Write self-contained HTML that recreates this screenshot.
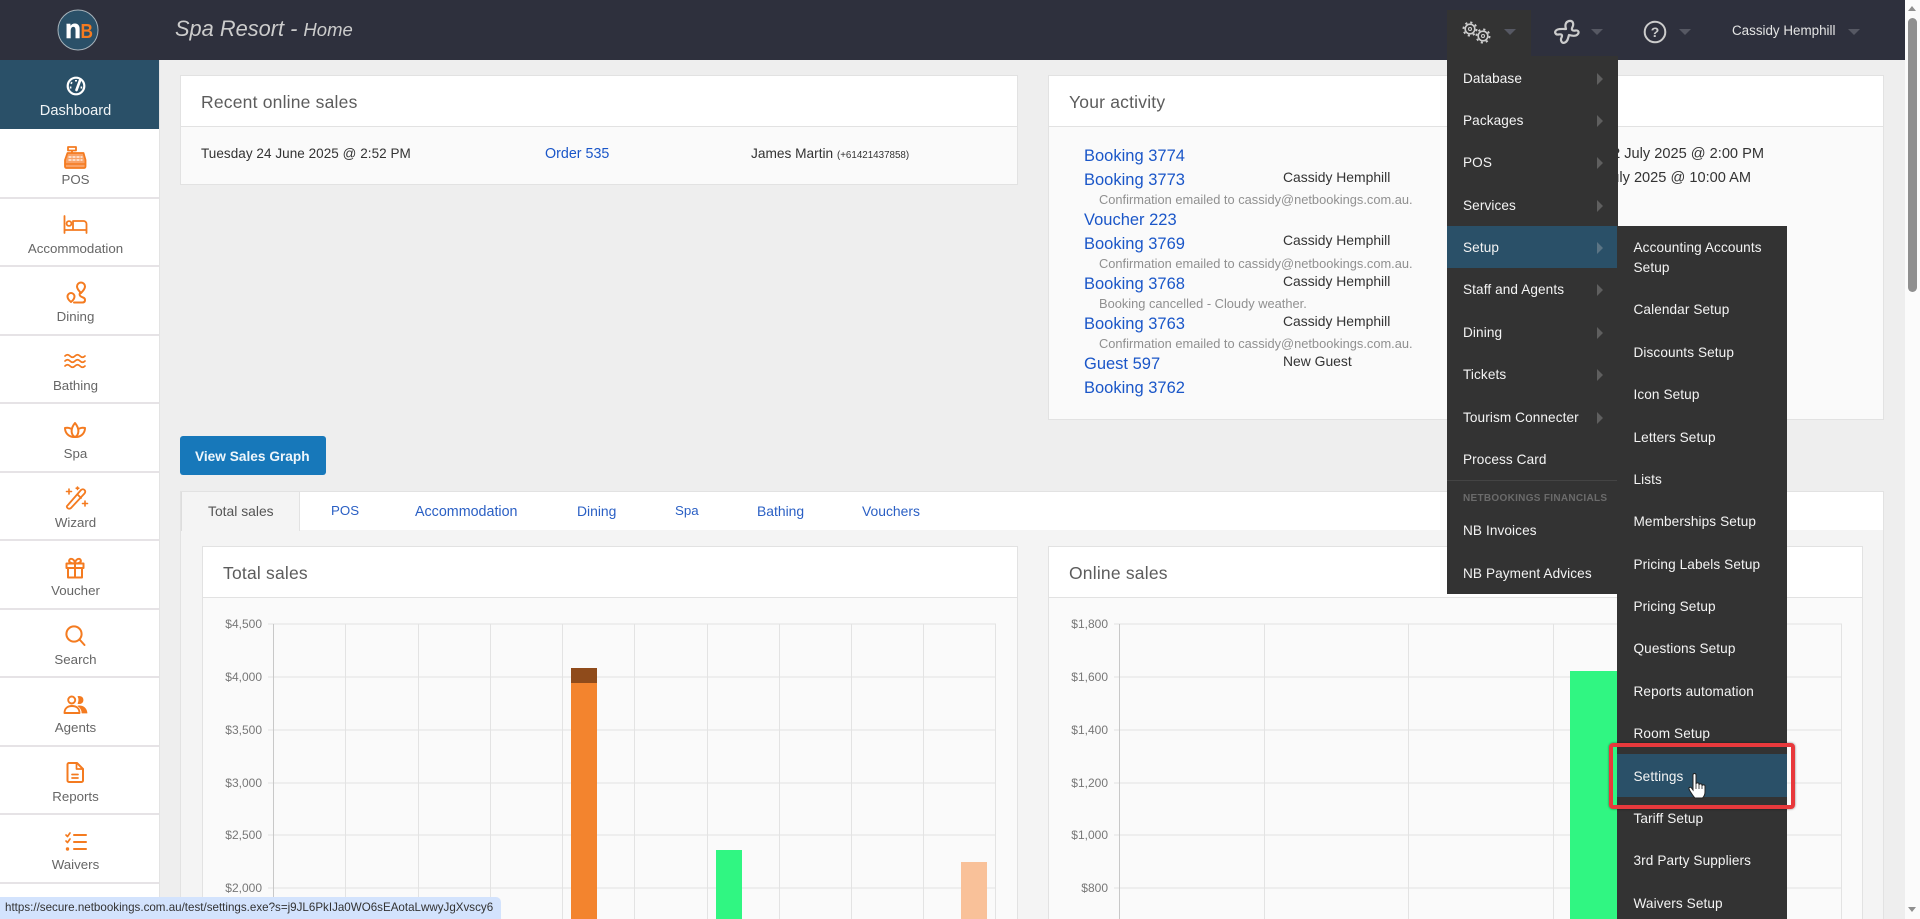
<!DOCTYPE html>
<html><head><meta charset="utf-8"><title>Spa Resort - Home</title>
<style>
html,body{margin:0;padding:0;width:1920px;height:919px;overflow:hidden;background:#eee;font-family:"Liberation Sans",sans-serif;color:#444}
.a,.t{position:absolute}
.t{white-space:nowrap;line-height:20px;font-size:13.5px;margin-top:1px}
a{color:#1a56c8;text-decoration:none}
.side{color:#666;font-size:13.3px;width:151px;left:0;text-align:center}
.ln{position:absolute;left:0;width:159px;height:2px;background:#e6e3e6}
.ic{position:absolute;left:55px;width:40px;height:40px;fill:none;stroke:#f47b20;stroke-width:1.8;stroke-linecap:round;stroke-linejoin:round}
.m{color:#f4f4f4;font-size:13.6px;letter-spacing:.1px}
.ar{position:absolute;left:1597px;width:0;height:0;margin-top:1px;border-left:6px solid #5f5f5f;border-top:6px solid transparent;border-bottom:6px solid transparent}
.car{position:absolute;top:29px;width:0;height:0;border-top:6px solid #565863;border-left:6px solid transparent;border-right:6px solid transparent}
.pt{font-size:17.5px;color:#5c5c5c;letter-spacing:.2px}
.lk{font-size:16.5px;color:#1a56c8}
.nm{font-size:13.9px;color:#333}
.cf{font-size:12.85px;color:#909090}
.tb{font-size:13.9px;color:#2a5fc4;top:500px}
.yl{font-size:12px;color:#777;text-align:right;width:60px;margin-top:0}
</style></head><body>

<!-- main panels -->
<div class="a" style="left:180px;top:75px;width:836px;height:108px;background:#fafafa;border:1px solid #e2e2e2"></div>
<div class="a" style="left:181px;top:76px;width:836px;height:50px;background:#fff;border-bottom:1px solid #e2e2e2"></div>
<div class="t pt" style="left:201px;top:91px">Recent online sales</div>
<div class="t" style="left:201px;top:143px;color:#333;letter-spacing:.05px">Tuesday 24 June 2025 @ 2:52 PM</div>
<a class="t" style="left:545px;top:143px;font-size:14.3px">Order 535</a>
<div class="t" style="left:751px;top:143px;color:#333;font-size:13.7px">James Martin <span style="font-size:9.8px">(+61421437858)</span></div>

<div class="a" style="left:1048px;top:75px;width:834px;height:343px;background:#fafafa;border:1px solid #e2e2e2"></div>
<div class="a" style="left:1049px;top:76px;width:834px;height:50px;background:#fff;border-bottom:1px solid #e2e2e2"></div>
<div class="t pt" style="left:1069px;top:91px">Your activity</div>
<a class="t lk" style="left:1084px;top:145px">Booking 3774</a>
<a class="t lk" style="left:1084px;top:169px">Booking 3773</a>
<div class="t nm" style="left:1283px;top:166px">Cassidy Hemphill</div>
<div class="t cf" style="left:1099px;top:189px">Confirmation emailed to cassidy@netbookings.com.au.</div>
<a class="t lk" style="left:1084px;top:209px">Voucher 223</a>
<a class="t lk" style="left:1084px;top:233px">Booking 3769</a>
<div class="t nm" style="left:1283px;top:229px">Cassidy Hemphill</div>
<div class="t cf" style="left:1099px;top:253px">Confirmation emailed to cassidy@netbookings.com.au.</div>
<a class="t lk" style="left:1084px;top:273px">Booking 3768</a>
<div class="t nm" style="left:1283px;top:270px">Cassidy Hemphill</div>
<div class="t cf" style="left:1099px;top:293px">Booking cancelled - Cloudy weather.</div>
<a class="t lk" style="left:1084px;top:313px">Booking 3763</a>
<div class="t nm" style="left:1283px;top:310px">Cassidy Hemphill</div>
<div class="t cf" style="left:1099px;top:333px">Confirmation emailed to cassidy@netbookings.com.au.</div>
<a class="t lk" style="left:1084px;top:353px">Guest 597</a>
<div class="t nm" style="left:1283px;top:350px">New Guest</div>
<a class="t lk" style="left:1084px;top:377px">Booking 3762</a>
<div class="t" style="right:156px;top:143px;color:#333;font-size:14.6px">Wednesday 2 July 2025 @ 2:00 PM</div>
<div class="t" style="right:169px;top:167px;color:#333;font-size:14.6px">Tuesday 1 July 2025 @ 10:00 AM</div>

<div class="a" style="left:180px;top:436px;width:146px;height:39px;background:#1778ba;border-radius:3px"></div>
<div class="t" style="left:195px;top:446px;color:#eef6fb;font-weight:bold;font-size:13.7px">View Sales Graph</div>

<!-- tabs -->
<div class="a" style="left:180px;top:491px;width:1702px;height:38px;background:#fff;border:1px solid #e2e2e2"></div>
<div class="a" style="left:180px;top:530px;width:1702px;height:389px;background:#f4f4f4;border-left:1px solid #e2e2e2;border-right:1px solid #e2e2e2"></div>
<div class="a" style="left:181px;top:492px;width:117px;height:39px;background:#f4f4f4;border-left:1px solid #ddd;border-right:1px solid #e2e2e2"></div>
<div class="t tb" style="left:208px;color:#555">Total sales</div>
<a class="t tb" style="left:331px;font-size:13.3px">POS</a>
<a class="t tb" style="left:415px;font-size:14.3px;top:501px">Accommodation</a>
<a class="t tb" style="left:577px">Dining</a>
<a class="t tb" style="left:675px;font-size:13.3px">Spa</a>
<a class="t tb" style="left:757px">Bathing</a>
<a class="t tb" style="left:862px">Vouchers</a>

<!-- chart panels -->
<div class="a" style="left:202px;top:546px;width:816px;height:373px;background:#fafafa;border-left:1px solid #e2e2e2;border-right:1px solid #e2e2e2;border-top:1px solid #e2e2e2;box-sizing:border-box"></div>
<div class="a" style="left:203px;top:547px;width:814px;height:50px;background:#fff;border-bottom:1px solid #e2e2e2"></div>
<div class="t pt" style="left:223px;top:562px">Total sales</div>
<div class="a" style="left:1048px;top:546px;width:815px;height:373px;background:#fafafa;border-left:1px solid #e2e2e2;border-right:1px solid #e2e2e2;border-top:1px solid #e2e2e2;box-sizing:border-box"></div>
<div class="a" style="left:1049px;top:547px;width:813px;height:50px;background:#fff;border-bottom:1px solid #e2e2e2"></div>
<div class="t pt" style="left:1069px;top:562px">Online sales</div>

<svg class="a" style="left:0;top:0" width="1920" height="919">
 <g stroke="#e3e3e3" stroke-width="1" shape-rendering="crispEdges">
  <path d="M268 624H996M268 677H996M268 730H996M268 783H996M268 835H996M268 888H996"/>
  <path d="M345.5 624V919M418.5 624V919M490.5 624V919M562.5 624V919M634.5 624V919M707.5 624V919M779.5 624V919M851.5 624V919M923.5 624V919M995.5 624V919"/>
  <path d="M1114 624H1842M1114 677H1842M1114 730H1842M1114 783H1842M1114 835H1842M1114 888H1842"/>
  <path d="M1264.5 624V919M1408.5 624V919M1553.5 624V919M1697.5 624V919M1841.5 624V919"/>
 </g>
 <path d="M273.5 624V919M1119.5 624V919" stroke="#c8c8c8" shape-rendering="crispEdges"/>
 <rect x="571" y="668" width="26" height="15" fill="#8f4b1b"/>
 <rect x="571" y="683" width="26" height="236" fill="#f3842e"/>
 <rect x="716" y="850" width="26" height="69" fill="#30f682"/>
 <rect x="961" y="862" width="26" height="57" fill="#f9c199"/>
 <rect x="1570" y="671" width="52" height="248" fill="#30f682"/>
</svg>
<div class="t yl" style="left:202px;top:614px">$4,500</div>
<div class="t yl" style="left:202px;top:667px">$4,000</div>
<div class="t yl" style="left:202px;top:720px">$3,500</div>
<div class="t yl" style="left:202px;top:773px">$3,000</div>
<div class="t yl" style="left:202px;top:825px">$2,500</div>
<div class="t yl" style="left:202px;top:878px">$2,000</div>
<div class="t yl" style="left:1048px;top:614px">$1,800</div>
<div class="t yl" style="left:1048px;top:667px">$1,600</div>
<div class="t yl" style="left:1048px;top:720px">$1,400</div>
<div class="t yl" style="left:1048px;top:773px">$1,200</div>
<div class="t yl" style="left:1048px;top:825px">$1,000</div>
<div class="t yl" style="left:1048px;top:878px">$800</div>

<!-- sidebar -->
<div class="a" style="left:0;top:60px;width:159px;height:859px;background:#fff;border-right:1px solid #e3e3e3"></div>
<div class="a" style="left:0;top:60px;width:159px;height:69px;background:#2a5068"></div>
<svg class="a" style="left:56px;top:66px" width="40" height="40" viewBox="0 0 40 40">
 <circle cx="20" cy="20" r="8.300" fill="#2a5068" stroke="#fff" stroke-width="2.200"/>
 <path d="M20 14v1.500M14.800 16.500l1.300 1M13.800 21.500h1.600M26.200 21.500h-1.600" stroke="#fff" stroke-width="2"/>
 <path d="M24 14.500L20.500 24" stroke="#fff" stroke-width="2.600" stroke-linecap="round"/>
</svg>
<div class="t side" style="top:100px;color:#f0f4f6;font-size:14.6px">Dashboard</div>

<div class="ln" style="top:197px"></div><div class="ln" style="top:265px"></div><div class="ln" style="top:334px"></div><div class="ln" style="top:402px"></div><div class="ln" style="top:471px"></div><div class="ln" style="top:539px"></div><div class="ln" style="top:608px"></div><div class="ln" style="top:676px"></div><div class="ln" style="top:745px"></div><div class="ln" style="top:813px"></div><div class="ln" style="top:882px"></div>

<svg class="ic" style="top:136px" viewBox="0 0 40 40"><path d="M13 11h8v3.500h-8zM17 14.500v2.500"/><path d="M12.500 17h16l2 7v6.500a1.500 1.500 0 0 1-1.500 1.500H11.500a1.500 1.500 0 0 1-1.500-1.500V24z" fill="#f9a267"/><path d="M14 21h2M18 21h2M22 21h2M26 21h1M14 24h2M18 24h2M22 24h2M26 24h1" stroke="#fff" stroke-width="1.300"/><path d="M10 28h20" stroke-width="1.500"/></svg>
<div class="t side" style="top:169px">POS</div>
<svg class="ic" style="top:204px" viewBox="0 0 40 40"><path d="M9.500 12v17M9.500 26h22M31.500 29V20a3 3 0 0 0-3-3H18v9"/><circle cx="14" cy="19.500" r="2.400"/></svg>
<div class="t side" style="top:238px">Accommodation</div>
<svg class="ic" style="top:273px" viewBox="0 0 40 40"><path d="M26 20c-3-3-4-5-4-6.500a4 4 0 0 1 8 0c0 1.500-1 3.500-4 6.500z" stroke-width="2"/><path d="M16 29c-2.500-2-3.500-4-3.500-5.500a3.500 3.500 0 0 1 7 0c0 1.500-1 3.500-3.500 5.500z" stroke-width="2"/><path d="M25 20c-1 2 0 3.500 3 4.500 3 1 2.500 5-.5 5H19" stroke-width="2"/></svg>
<div class="t side" style="top:306px">Dining</div>
<svg class="ic" style="top:341px" viewBox="0 0 40 40"><path d="M10 15q2.500-2.500 5 0t5 0 5 0 5 0M10 20q2.500-2.500 5 0t5 0 5 0 5 0M10 25q2.500-2.500 5 0t5 0 5 0 5 0" stroke-width="1.700"/></svg>
<div class="t side" style="top:375px">Bathing</div>
<svg class="ic" style="top:410px" viewBox="0 0 40 40"><path d="M20 27c-4-2-5-8 0-14 5 6 4 12 0 14z" stroke-width="2"/><path d="M15.500 18.500c-2-1-3.500-1-5.500-.5 0 5.500 4.500 9.500 10 9 5.500.5 10-3.500 10-9-2-.5-3.500-.5-5.500.5" stroke-width="2"/></svg>
<div class="t side" style="top:443px">Spa</div>
<svg class="ic" style="top:478px" viewBox="0 0 40 40"><path d="M12.500 27.500L26 12q2-1.500 3.500 0t0 3.500L16 30q-2 1.500-3.500 0t0-2.500z" stroke-width="1.800"/><path d="M22.500 16.500l3.500 3.500" /><path d="M14 11v5M11.500 13.500h5M30 23v5M27.500 25.500h5M22.500 9v2.500M21.200 10.200h2.600" stroke-width="1.600"/></svg>
<div class="t side" style="top:512px">Wizard</div>
<svg class="ic" style="top:547px" viewBox="0 0 40 40"><path d="M11.500 16.500h17v4.500h-17zM13 21v9.500h14V21M20 16.500v14" stroke-width="2"/><path d="M20 16.500c-5.500 0-6.500-2-5.500-3.800s5-1 5.500 3.800c.5-4.800 4.500-5.600 5.500-3.800s0 3.800-5.500 3.800z" stroke-width="2"/></svg>
<div class="t side" style="top:580px">Voucher</div>
<svg class="ic" style="top:615px" viewBox="0 0 40 40"><circle cx="19" cy="19" r="7.600" stroke-width="2"/><path d="M25 25l4.500 5" stroke-width="2"/></svg>
<div class="t side" style="top:649px">Search</div>
<svg class="ic" style="top:684px" viewBox="0 0 40 40"><circle cx="16.700" cy="16" r="3.500" stroke-width="1.900"/><path d="M9.500 29c0-4.500 3-7 7.500-7s7.500 2.500 7.500 7z" stroke-width="1.900"/><path d="M23 12.500c3-.5 5 1 5 3.500s-2 4-5 3.500c1-2 1-5 0-7z" fill="#f47b20" stroke-width=".8"/><path d="M23 22c5-.5 8.500 2 9 7h-5c0-3-1.500-5.500-4-7z" fill="#f47b20" stroke-width=".8"/></svg>
<div class="t side" style="top:717px">Agents</div>
<svg class="ic" style="top:752px" viewBox="0 0 40 40"><path d="M14 11h8l6 6v11.500a1.500 1.500 0 0 1-1.500 1.500h-12.500a1.500 1.500 0 0 1-1.500-1.500V12.500A1.500 1.500 0 0 1 14 11z" stroke-width="2"/><path d="M21.500 11v6h6.500M17 22.500h6M17 26h6" stroke-width="1.700"/></svg>
<div class="t side" style="top:786px">Reports</div>
<svg class="ic" style="top:821px" viewBox="0 0 40 40"><path d="M19 14h12M19 21h12M19 28h12" stroke-width="2"/><path d="M11 14l1.500 1.500L15 12M11 20l1.500 1.500L15 18" stroke-width="1.700"/><circle cx="12.500" cy="28" r=".9" stroke-width="1.600"/></svg>
<div class="t side" style="top:854px">Waivers</div>

<!-- topbar -->
<div class="a" style="left:0;top:0;width:1905px;height:60px;background:#2e303d"></div>
<svg class="a" style="left:56px;top:8px" width="44" height="44" viewBox="0 0 44 44">
 <circle cx="22" cy="22" r="20" fill="#2a5068" stroke="#a6b2ba" stroke-width="1"/>
 <text x="9" y="30" font-family="Liberation Sans" font-weight="bold" font-size="26.500" fill="#fff" stroke="#fff" stroke-width=".5" textLength="16" lengthAdjust="spacingAndGlyphs">n</text>
 <text x="24.500" y="30" font-family="Liberation Sans" font-weight="bold" font-size="20" fill="#f47b20" textLength="12.500" lengthAdjust="spacingAndGlyphs">B</text>
</svg>
<div class="t" style="left:175px;top:17px;margin-top:0;font-size:21.8px;font-style:italic;color:#ccc;line-height:24px">Spa Resort - <span style="font-size:18.5px">Home</span></div>

<!-- top right -->
<div class="a" style="left:1447px;top:10px;width:84px;height:50px;background:#333"></div>
<svg class="a" style="left:1455px;top:15px" width="50" height="36" viewBox="0 0 50 36" fill="none" stroke="#ccc">
 <circle cx="15" cy="14" r="4.800" stroke-width="1.600"/><circle cx="15" cy="14" r="6.600" stroke-width="1.800" stroke-dasharray="2.200 2.980"/>
 <circle cx="28" cy="21" r="4.800" stroke-width="1.600"/><circle cx="28" cy="21" r="6.600" stroke-width="1.800" stroke-dasharray="2.200 2.980"/><circle cx="28" cy="21" r="1.500" stroke-width="1.100"/><circle cx="15" cy="14" r="1.500" stroke-width="1.100"/>
</svg>
<svg class="a" style="left:1552px;top:18px" width="28" height="28" viewBox="0 0 28 28" fill="none" stroke="#ccc" stroke-width="2.200" stroke-linejoin="round">
 <path d="M14 11c-1-3-1-7 3-8s5 3 3.500 6 0 4 3 3.500 4 2 2 4-5 1.500-8.500.5c-1 3-1 6-4 7.500s-5-2-3.500-5-.5-3.500-3-3-4.500-2-2.500-4 6-1.500 10-1.500z"/>
</svg>
<svg class="a" style="left:1641px;top:18px" width="28" height="28" viewBox="0 0 28 28"><circle cx="14" cy="14" r="10.300" fill="none" stroke="#ccc" stroke-width="2"/><text x="14" y="19" text-anchor="middle" font-family="Liberation Sans" font-weight="bold" font-size="14" fill="#ccc">?</text></svg>
<div class="car" style="left:1504px"></div><div class="car" style="left:1591px"></div><div class="car" style="left:1679px"></div><div class="car" style="left:1848px"></div>
<div class="t" style="left:1732px;top:21px;margin-top:0;color:#e4e4e4;font-size:13.4px">Cassidy Hemphill</div>

<!-- scrollbar -->
<div class="a" style="left:1905px;top:0;width:15px;height:919px;background:#fbfbfb"></div>
<div class="a" style="left:1908px;top:18px;width:9px;height:274px;background:#8f8f8f;border-radius:5px"></div>
<div class="a" style="left:1908px;top:6px;width:0;height:0;border-bottom:5px solid #8f8f8f;border-left:4.500px solid transparent;border-right:4.500px solid transparent"></div>
<div class="a" style="left:1908px;top:907px;width:0;height:0;border-top:5px solid #8f8f8f;border-left:4.500px solid transparent;border-right:4.500px solid transparent"></div>

<!-- menus -->
<div class="a" style="left:1447px;top:56px;width:171px;height:538px;background:#333"></div>
<div class="a" style="left:1447px;top:226px;width:170px;height:42px;background:#2a5068"></div>
<div class="a" style="left:1617px;top:226px;width:170px;height:693px;background:#333"></div>
<div class="a" style="left:1447px;top:480px;width:170px;height:1px;background:#444"></div>

<div class="t m" style="left:1463px;top:68px">Database</div><div class="ar" style="top:72px"></div>
<div class="t m" style="left:1463px;top:110px">Packages</div><div class="ar" style="top:114px"></div>
<div class="t m" style="left:1463px;top:152px">POS</div><div class="ar" style="top:156px"></div>
<div class="t m" style="left:1463px;top:195px">Services</div><div class="ar" style="top:199px"></div>
<div class="t m" style="left:1463px;top:237px">Setup</div><div class="ar" style="top:241px;border-left-color:#5b7484"></div>
<div class="t m" style="left:1463px;top:279px">Staff and Agents</div><div class="ar" style="top:283px"></div>
<div class="t m" style="left:1463px;top:322px">Dining</div><div class="ar" style="top:326px"></div>
<div class="t m" style="left:1463px;top:364px">Tickets</div><div class="ar" style="top:368px"></div>
<div class="t m" style="left:1463px;top:407px">Tourism Connecter</div><div class="ar" style="top:411px"></div>
<div class="t m" style="left:1463px;top:449px">Process Card</div>
<div class="t" style="left:1463px;top:488px;color:#6b6b6b;font-size:10px;font-weight:bold;letter-spacing:.3px">NETBOOKINGS FINANCIALS</div>
<div class="t m" style="left:1463px;top:520px">NB Invoices</div>
<div class="t m" style="left:1463px;top:563px">NB Payment Advices</div>

<div class="t m" style="left:1633.5px;top:237px">Accounting Accounts</div>
<div class="t m" style="left:1633.5px;top:257px">Setup</div>
<div class="t m" style="left:1633.5px;top:299px">Calendar Setup</div>
<div class="t m" style="left:1633.5px;top:342px">Discounts Setup</div>
<div class="t m" style="left:1633.5px;top:384px">Icon Setup</div>
<div class="t m" style="left:1633.5px;top:427px">Letters Setup</div>
<div class="t m" style="left:1633.5px;top:469px">Lists</div>
<div class="t m" style="left:1633.5px;top:511px">Memberships Setup</div>
<div class="t m" style="left:1633.5px;top:554px">Pricing Labels Setup</div>
<div class="t m" style="left:1633.5px;top:596px">Pricing Setup</div>
<div class="t m" style="left:1633.5px;top:638px">Questions Setup</div>
<div class="t m" style="left:1633.5px;top:681px">Reports automation</div>
<div class="t m" style="left:1633.5px;top:723px">Room Setup</div>
<div class="a" style="left:1617px;top:754px;width:170px;height:43px;background:#2a5068"></div>
<div class="t m" style="left:1633.5px;top:766px">Settings</div>
<div class="t m" style="left:1633.5px;top:808px">Tariff Setup</div>
<div class="t m" style="left:1633.5px;top:850px">3rd Party Suppliers</div>
<div class="t m" style="left:1633.5px;top:893px">Waivers Setup</div>

<!-- red highlight -->
<div class="a" style="left:1609px;top:743px;width:178px;height:58px;border:4px solid #e8393c;border-radius:4px;box-shadow:0 0 2px rgba(0,0,0,.5)"></div>

<!-- hand cursor -->
<svg class="a" style="left:1687px;top:772px" width="22" height="28" viewBox="0 0 22 28">
 <path d="M6 3c0-2 3-2 3 0v9c0-1.500 3-1.500 3 0v1c0-1.500 3-1.500 3 0v1c0-1.500 3-1.500 3 0v6c0 3-1.500 5-2.500 6H8c-2-2-3-4-5-7l-1-2c-.5-1.500 1.500-2.500 2.500-1L6 18z" fill="#fff" stroke="#222" stroke-width="1"/>
 <path d="M9 12v5M12 13v4M15 14v3" stroke="#222" stroke-width=".8" fill="none"/>
</svg>

<!-- status bar -->
<div class="a" style="left:0;top:897px;width:501px;height:22px;background:#d3e3fd;border-top-right-radius:5px"></div>
<div class="t" style="left:5px;top:897px;font-size:11.6px;color:#333">https://secure.netbookings.com.au/test/settings.exe?s=j9JL6PkIJa0WO6sEAotaLwwyJgXvscy6</div>
</body></html>
